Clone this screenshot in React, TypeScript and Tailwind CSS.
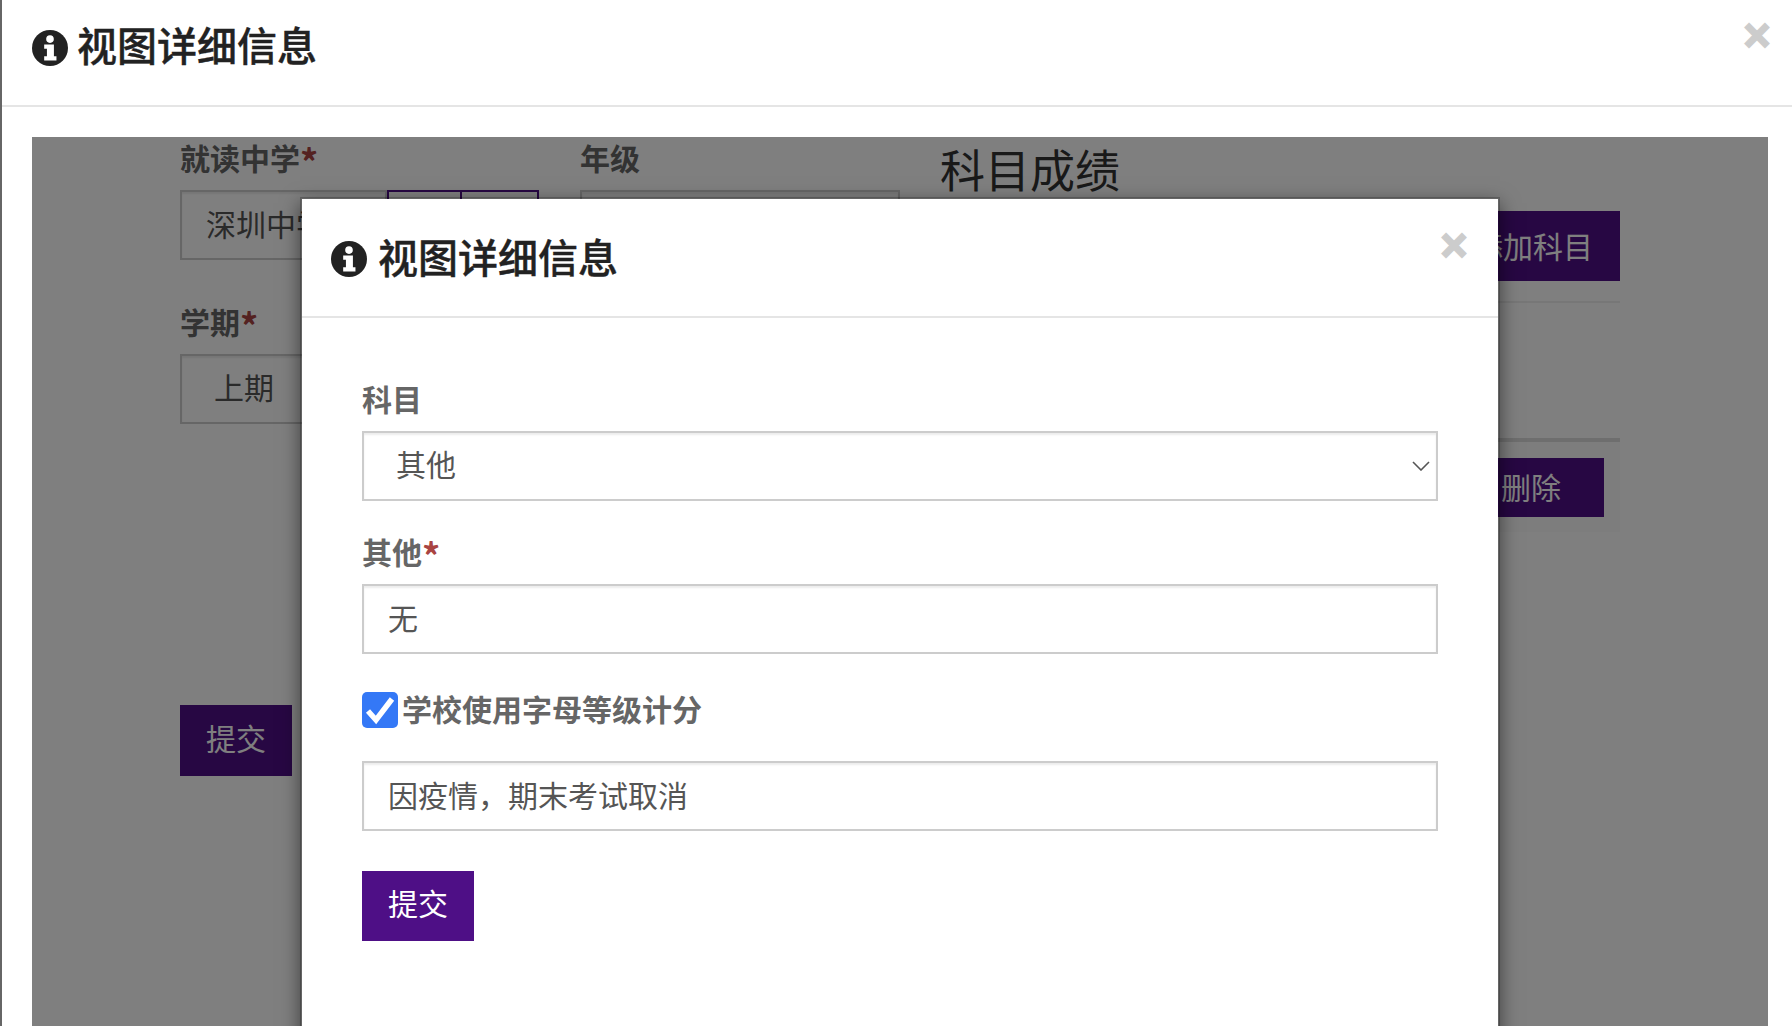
import React from "react";

const font = { fontFamily: '"Liberation Sans", "Noto Sans CJK SC", sans-serif' };

function InfoIcon({ className }: { className: string }) {
  return (
    <svg viewBox="0 0 34 34" className={className} aria-hidden="true">
      <circle cx="17" cy="17" r="17" fill="#222222" />
      <circle cx="17" cy="8.6" r="3.6" fill="#ffffff" />
      <path d="M11.5 13.6h9.2v11.2h2.4v4H11.5v-4h2.6v-7.2h-2.6z" fill="#ffffff" />
    </svg>
  );
}

function Close({ className }: { className: string }) {
  return (
    <span
      className={`absolute w-[30px] text-center text-[46px] leading-[52px] font-bold text-[#cccccc] [-webkit-text-stroke:2px_#cccccc] ${className}`}
      style={{ fontFamily: '"Liberation Sans", sans-serif' }}
    >
      ×
    </span>
  );
}

function Title() {
  return (
    <h4 className="flex items-center text-[40px] leading-[44px] font-medium text-[#222222] [-webkit-text-stroke:0.4px_#222222]">
      视图详细信息
    </h4>
  );
}

function Label({ text, required }: { text: string; required?: boolean }) {
  return (
    <label className="block h-[42px] mb-[10px] text-[30px] leading-[44px] font-bold text-[#666666] whitespace-nowrap">
      {text}
      {required && (
        <span
          className="text-[36px] leading-[0] text-[#a94442] align-[-6px]"
          style={{ fontFamily: '"Noto Sans CJK SC", sans-serif' }}
        >
          *
        </span>
      )}
    </label>
  );
}

const field =
  "block w-full h-[70px] border-2 border-[#cccccc] bg-white text-[30px] text-[#555555] outline-none shadow-[inset_0_2px_2px_rgba(0,0,0,0.075)]";

function Input({ value }: { value: string }) {
  return <input readOnly value={value} className={`${field} px-[24px] pb-[4px]`} />;
}

function PurpleButton({ children, className = "" }: { children: React.ReactNode; className?: string }) {
  return (
    <button className={`block bg-[#4e0f86] text-white text-[30px] leading-[42px] ${className}`}>{children}</button>
  );
}

function BackgroundForm() {
  return (
    <div className="grid grid-cols-[359px_320px_679px] gap-x-[41px] pl-[148px] pt-[1px]">
      <div>
        <Label text="就读中学" required />
        <div className="flex">
          <input readOnly value="深圳中学" className={`${field} px-[24px] pb-[4px] !w-[207px]`} />
          <div className="w-[75px] h-[70px] border-2 border-[#4e0f86] bg-white" />
          <div className="w-[78px] h-[70px] border-2 border-l-0 border-[#4e0f86] bg-white" />
        </div>
        <div className="mt-[42px]">
          <Label text="学期" required />
          <div className={`${field} pl-[32px] leading-[66px]`}>上期</div>
        </div>
        <PurpleButton className="mt-[281px] w-[112px] h-[71px] pb-[2px]">提交</PurpleButton>
      </div>
      <div>
        <Label text="年级" />
        <div className={field} />
      </div>
      <div className="flex flex-col pt-[7px]">
        <h3 className="h-[52px] -ml-[1px] text-[45px] leading-[56px] font-normal text-[#333333]">科目成绩</h3>
        <PurpleButton className="self-end mt-[14px] w-[199px] h-[70px] pl-[52px] pt-[4px] text-left whitespace-nowrap">
          添加科目
        </PurpleButton>
        <div className="mt-[20px] h-[2px] bg-[#eeeeee]" />
        <div className="mt-[135px] h-[4px] bg-[#dddddd]" />
        <div className="h-[90px] bg-[#fbfbfb] pt-[16px] pr-[16px]">
          <PurpleButton className="ml-auto w-[164px] h-[59px] pr-[43px] pt-[3px] text-right">删除</PurpleButton>
        </div>
      </div>
    </div>
  );
}

function InnerModal() {
  return (
    <div className="absolute left-[268px] top-[60px] w-[1200px] h-[900px] bg-white bg-clip-padding border-2 border-black/20 shadow-[0_6px_18px_rgba(0,0,0,0.5)]">
      <div className="relative h-[119px] border-b-2 border-[#e5e5e5] pl-[29px] pt-[38px]">
        <div className="flex items-center gap-[11px]">
          <InfoIcon className="w-[36px] h-[36px] shrink-0" />
          <Title />
        </div>
        <Close className="right-[29px] top-[20px]" />
      </div>
      <div className="px-[60px] pt-[61px] w-[1196px]">
        <Label text="科目" />
        <div className="relative">
          <select
            defaultValue="其他"
            className={`${field} appearance-none pl-[32px] pb-[2px] rounded-none`}
          >
            <option>其他</option>
          </select>
          <svg viewBox="0 0 18 10" className="absolute right-[8px] top-[30px] w-[18px] h-[10px]" fill="none" stroke="#555555" strokeWidth="1.6">
            <path d="M1 1l8 8 8-8" />
          </svg>
        </div>
        <div className="mt-[31px]">
          <Label text="其他" required />
          <Input value="无" />
        </div>
        <div className="mt-[38px] flex items-center h-[36px]">
          <span className="flex items-center justify-center w-[36px] h-[36px] rounded-[5px] bg-[#3478f6]">
            <svg viewBox="0 0 36 36" className="w-[36px] h-[36px]" fill="none" stroke="#ffffff" strokeWidth="5.5">
              <path d="M6 19l8 9L30 7" />
            </svg>
          </span>
          <span className="ml-[4px] pt-[2px] text-[30px] leading-[44px] font-bold text-[#666666]">学校使用字母等级计分</span>
        </div>
        <div className="mt-[33px]">
          <Input value="因疫情，期末考试取消" />
        </div>
        <PurpleButton className="mt-[40px] w-[112px] h-[70px] pb-[2px]">提交</PurpleButton>
      </div>
    </div>
  );
}

export default function App() {
  return (
    <div className="relative h-[1026px] overflow-hidden bg-white border-l-2 border-[#666666]" style={font}>
      <div className="relative h-[107px] border-b-2 border-[#e5e5e5] pl-[30px] pt-[25px]">
        <div className="flex items-center gap-[9px]">
          <InfoIcon className="w-[36px] h-[36px] shrink-0 mt-[2px]" />
          <Title />
        </div>
        <Close className="right-[20px] top-[9px]" />
      </div>
      <div className="pl-[30px] pr-[24px] pt-[30px]">
        <div className="relative h-[889px] bg-white">
          <BackgroundForm />
          <div className="absolute inset-0 bg-black/50" />
          <InnerModal />
        </div>
      </div>
    </div>
  );
}
